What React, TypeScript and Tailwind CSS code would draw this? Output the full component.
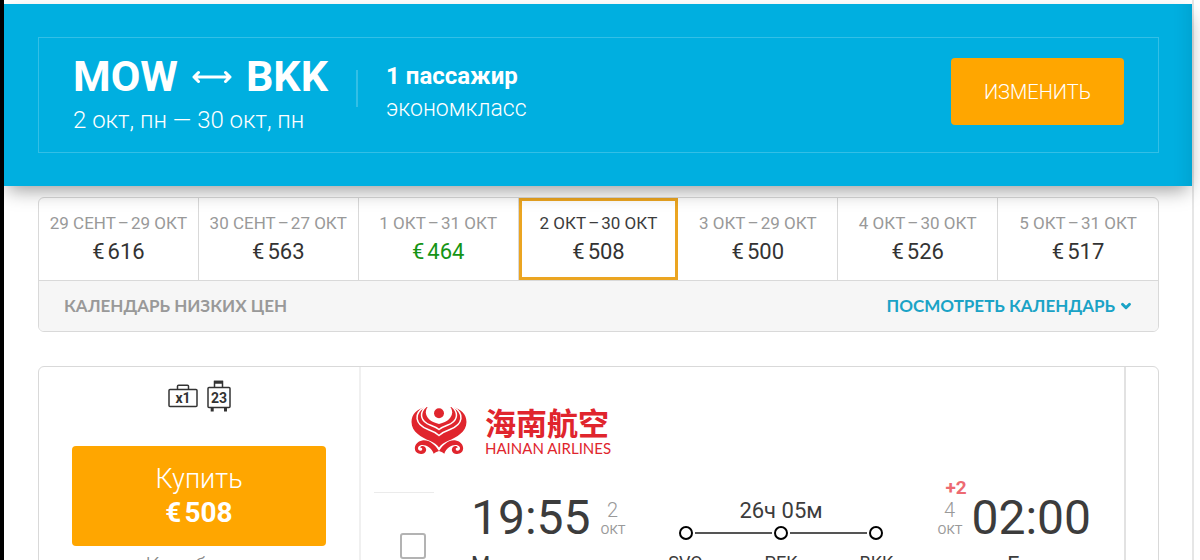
import { ChevronDown } from 'lucide-react';

const dates = [
  { from: '29 СЕНТ', to: '29 ОКТ', price: 616 },
  { from: '30 СЕНТ', to: '27 ОКТ', price: 563 },
  { from: '1 ОКТ', to: '31 ОКТ', price: 464, cheapest: true },
  { from: '2 ОКТ', to: '30 ОКТ', price: 508, active: true },
  { from: '3 ОКТ', to: '29 ОКТ', price: 500 },
  { from: '4 ОКТ', to: '30 ОКТ', price: 526 },
  { from: '5 ОКТ', to: '31 ОКТ', price: 517 },
];

const stops = ['SVO', 'PEK', 'BKK'];

const SearchHeader = () => (
  <header className="relative z-10 mt-1 bg-[#00afe0] py-[33px] pl-[34px] pr-[33px] shadow-[0_8px_18px_-4px_rgba(0,0,0,0.4),inset_-20px_0_20px_-20px_rgba(0,0,0,0.12)]">
    <div className="flex h-[116px] items-start border border-[#33bfe6] px-[34px] text-white">
      <div className="pt-4">
        <h1 className="flex items-center text-[43px] font-bold leading-[44px]">
          MOW
          <svg viewBox="0 0 40 14" fill="none" stroke="currentColor" strokeWidth="3" className="mx-[14px] mt-[2px] h-[14px] w-10" aria-hidden="true">
            <path strokeLinecap="round" strokeLinejoin="round" d="M2 7h36M6.500 2.500L2 7l4.500 4.500M33.500 2.500L38 7l-4.500 4.500" />
          </svg>
          BKK
        </h1>
        <p className="mt-2 text-[24px] font-light leading-[28px]">2 окт, пн — 30 окт, пн</p>
      </div>
      <div className="ml-[28px] mt-8 h-[37px] w-[2px] bg-[#33bfe6]" />
      <div className="ml-7 pt-6">
        <p className="text-[24px] font-bold leading-[28px]">1 пассажир</p>
        <p className="mt-[5px] text-[23px] font-light leading-[28px]">экономкласс</p>
      </div>
      <button type="button" className="ml-auto mt-5 h-[67px] w-[173px] rounded bg-[#ffa600] text-[20px] font-light">ИЗМЕНИТЬ</button>
    </div>
  </header>
);

const PriceCalendar = () => (
  <section className="ml-[34px] mr-[33px] mt-[11px] overflow-hidden rounded-md border border-[#d9d9d9]">
    <div className="grid grid-cols-7">
      {dates.map(({ from, to, price, cheapest, active }) => (
        <button
          key={from}
          type="button"
          className={`h-[82px] ${active ? 'border-[3px] border-[#eba521] text-[#3c3c3c]' : 'border-r border-[#d9d9d9] text-[#999] last:border-r-0'}`}
        >
          <span className="block text-[17px] leading-[20px]">
            {from}
            <span className="mx-[2px]">–</span>
            {to}
          </span>
          <span className={`mt-[6px] block text-[22px] leading-[26px] ${cheapest ? 'text-[#159415]' : 'text-[#333]'}`}>
            <span className="mr-[3px]">€</span>
            {price}
          </span>
        </button>
      ))}
    </div>
    <div className="flex h-[51px] items-center justify-between border-t border-[#d9d9d9] bg-[#f6f6f6] px-[25px] font-['Lato',sans-serif] text-[17px] font-bold">
      <span className="text-[#999]">КАЛЕНДАРЬ НИЗКИХ ЦЕН</span>
      <a href="#calendar" className="flex items-center gap-1 text-[#1aa3c6]">
        ПОСМОТРЕТЬ КАЛЕНДАРЬ
        <ChevronDown size={14} strokeWidth={5} />
      </a>
    </div>
  </section>
);

const Baggage = () => (
  <div className="flex h-8 justify-center gap-[9px] text-[#333]">
    <svg viewBox="0 0 30 32" fill="none" stroke="currentColor" strokeWidth="1.500" className="h-8 w-[30px]">
      <rect x="1" y="9.500" width="28" height="17" rx="1" />
      <path d="M9.500 9.500V6.200a1 1 0 0 1 1-1h9a1 1 0 0 1 1 1v3.300" />
      <text x="15" y="23" textAnchor="middle" fill="currentColor" stroke="none" fontSize="14" fontWeight="700">x1</text>
    </svg>
    <svg viewBox="0 0 24 32" fill="none" stroke="currentColor" strokeWidth="1.500" className="h-8 w-6">
      <rect x="1" y="7.500" width="22" height="20" rx="1" />
      <path d="M7.500 7.500V1.500h8v6" />
      <path strokeWidth="3" d="M7 2.200h9M5.200 27.500v4M18.500 27.500v4" />
      <text x="12" y="22.500" textAnchor="middle" fill="currentColor" stroke="none" fontSize="14" fontWeight="700">23</text>
    </svg>
  </div>
);

const HainanLogo = () => (
  <div className="flex h-[50px] items-center gap-[18px] text-[#e0252d]">
    <svg viewBox="0 0 166 148" fill="currentColor" className="h-[49px] w-14" aria-hidden="true">
      <path d="M42 3C15 9 0 26 0 48c0 30 30 46 55 57 13 6 22 12 28 20 6-8 15-14 28-20 25-11 55-27 55-57 0-22-15-39-42-45z" />
      <path fill="#fff" d="M53-2C34 16 42 46 83 54c41-8 49-38 30-56z" />
      <g fill="none" stroke="#fff" strokeWidth="4.500">
        <path d="M46 0C20 22 28 48 58 58c11 4 19 8 25 13 6-5 14-9 25-13 30-10 38-36 12-58" />
        <path d="M42 2C4 22 10 56 50 71c14 5 25 11 33 18 8-7 19-13 33-18 40-15 46-49 8-69" />
      </g>
      <circle cx="83" cy="22" r="15" />
      <path d="M83 136c-12-20-32-36-51-32-20 3-28 25-17 36 11 10 31 4 29-10-2-9-13-12-18-5 7 0 9 7 3 10-7 2-12-6-8-12 8-12 38-4 46 21 5-4 11-6 16-8 5 2 11 4 16 8 8-25 38-33 46-21 4 6-1 14-8 12-6-3-4-10 3-10-5-7-16-4-18 5-2 14 18 20 29 10 11-11 3-33-17-36-19-4-39 12-51 32z" />
    </svg>
    <div>
      <p className="font-['Noto_Sans_CJK_SC',sans-serif] text-[31px] font-bold leading-[36px]">海南航空</p>
      <p className="font-['Lato',sans-serif] text-[15px] leading-[16px]">HAINAN AIRLINES</p>
    </div>
  </div>
);

const FlightDate = ({ day, shift }: { day: number; shift?: string }) => (
  <div className="relative w-6 pt-[5px] text-center text-[#999]">
    {shift && <span className="absolute -top-4 left-2 text-[19px] font-bold leading-[20px] text-[#ed6a72]">{shift}</span>}
    <p className="text-[20px] font-light leading-[22px]">{day}</p>
    <p className="text-[13px] leading-[18px]">ОКТ</p>
  </div>
);

const Route = () => (
  <div className="mx-[54px] flex-1 text-center">
    <p className="text-[22px] leading-[30px]">26ч 05м</p>
    <div className="flex items-center">
      {stops.map((stop, i) => (
        <div key={stop} className={`flex items-center ${i > 0 ? 'flex-1' : ''}`}>
          {i > 0 && <div className="mx-[2px] h-[2px] flex-1 bg-[#555]" />}
          <div className="size-[14px] rounded-full border-2 border-black" />
        </div>
      ))}
    </div>
    <div className="mt-3 flex justify-between text-[18px] leading-[22px]">
      {stops.map((stop) => (
        <span key={stop} className="flex w-[14px] justify-center">{stop}</span>
      ))}
    </div>
  </div>
);

const Ticket = () => (
  <section className="ml-[34px] mr-[33px] mt-[34px] flex rounded-md border border-[#d9d9d9]">
    <div className="w-[322px] shrink-0 border-r-2 border-[#f0f0f0] px-[33px] pt-[13px] text-center">
      <Baggage />
      <button type="button" className="mt-[34px] h-[100px] w-full rounded bg-[#ffa600] text-[28px] leading-[34px] text-white">
        <span className="block text-[27px] font-light">Купить</span>
        <span className="block font-bold">
          <span className="mr-[3px]">€</span>
          508
        </span>
      </button>
      <p className="mt-[6px] text-[22px] font-light leading-[28px] text-[#888]">Купибилет</p>
    </div>
    <div className="min-w-0 flex-1 pt-[38px]">
      <div className="pl-[50px]"><HainanLogo /></div>
      <div className="mt-[37px] flex pl-[13px] pr-[33px] text-[#3c3c3c]">
        <div className="w-[60px] border-t border-[#ebebeb] pl-[26px] pt-10">
          <input type="checkbox" aria-label="Рейс 19:55, Москва — Бангкок" className="block size-[26px] appearance-none rounded-[3px] border-2 border-[#b3b3b3]" />
        </div>
        <div className="ml-[37px] pt-[2px]">
          <div className="flex gap-[10px]">
            <p className="text-[48px] leading-[48px]">19:55</p>
            <FlightDate day={2} />
          </div>
          <p className="mt-[10px] text-[22px] leading-[26px]">Москва</p>
        </div>
        <div className="flex flex-1 pt-1"><Route /></div>
        <div className="pt-[2px]">
          <div className="flex gap-[10px]">
            <FlightDate day={4} shift="+2" />
            <p className="text-[48px] leading-[48px]">02:00</p>
          </div>
          <p className="mt-[10px] text-right text-[22px] leading-[26px]">Бангкок</p>
        </div>
      </div>
    </div>
    <div className="w-[34px] shrink-0 border-l-2 border-[#e2e2e2]" />
  </section>
);

const App = () => (
  <div className="h-screen overflow-hidden border-l-4 border-black bg-white pr-[6px] font-['Roboto',sans-serif]">
    <div className="flow-root min-h-screen border-r-2 border-[#e6e6e6]">
      <SearchHeader />
      <main>
        <PriceCalendar />
        <Ticket />
      </main>
    </div>
  </div>
);

export default App;
